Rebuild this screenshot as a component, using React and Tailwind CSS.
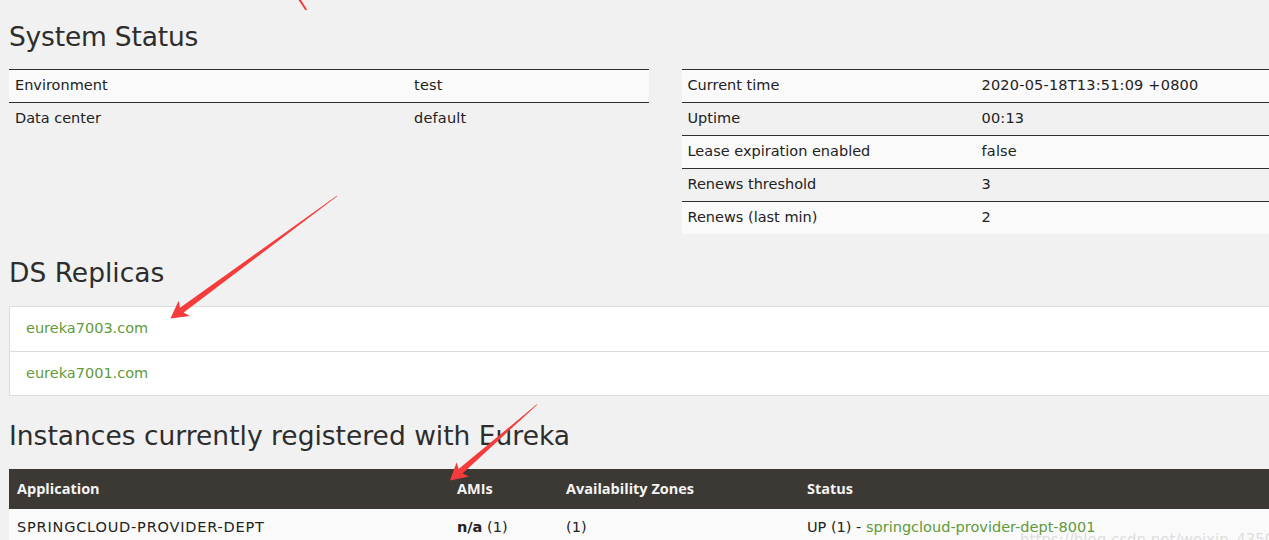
import React from "react";

const heading = "text-[26.5px] leading-[31px] text-[#2d2d2d] font-['DejaVu_Sans',sans-serif]";
const green = "text-[#5f9b3a]";

const leftRows = [
  ["Environment", "test"],
  ["Data center", "default"],
];

const rightRows = [
  ["Current time", "2020-05-18T13:51:09 +0800"],
  ["Uptime", "00:13"],
  ["Lease expiration enabled", "false"],
  ["Renews threshold", "3"],
  ["Renews (last min)", "2"],
];

function InfoTable({ rows, width, split }) {
  return (
    <div className={width}>
      {rows.map(([k, v], i) => (
        <div
          key={k}
          className={`flex h-[33px] items-center border-t border-[#2f2f2f] ${i % 2 === 0 ? "bg-[#fafafa]" : ""}`}
        >
          <div className={`${split} pl-[6px]`}>{k}</div>
          <div className="pl-[5px] tracking-[0.2px]">{v}</div>
        </div>
      ))}
    </div>
  );
}

function arrowPoints(tail, tip, headLen, headHalf, shaftBase, shaftTail) {
  const dx = tail[0] - tip[0];
  const dy = tail[1] - tip[1];
  const L = Math.hypot(dx, dy);
  const ux = dx / L;
  const uy = dy / L;
  const nx = -uy;
  const ny = ux;
  const bx = tip[0] + ux * headLen;
  const by = tip[1] + uy * headLen;
  const p = [
    [tip[0], tip[1]],
    [bx + ux * 3 + nx * headHalf, by + uy * 3 + ny * headHalf],
    [bx + nx * shaftBase / 2, by + ny * shaftBase / 2],
    [tail[0] + nx * shaftTail / 2, tail[1] + ny * shaftTail / 2],
    [tail[0] - nx * shaftTail / 2, tail[1] - ny * shaftTail / 2],
    [bx - nx * shaftBase / 2, by - ny * shaftBase / 2],
    [bx + ux * 3 - nx * headHalf, by + uy * 3 - ny * headHalf],
  ];
  return p.map((q) => q.map((n) => n.toFixed(1)).join(",")).join(" ");
}

function Arrows() {
  return (
    <svg className="pointer-events-none absolute left-0 top-0" width="1269" height="540">
      <polygon points="298.5,0 301,0 307,9.5 305.5,10.5" fill="#f53b3b" />
      <polygon points={arrowPoints([337, 196], [170.5, 318.5], 14, 9.5, 6, 0.6)} fill="#f53b3b" />
      <polygon points={arrowPoints([537, 404.5], [450, 480.5], 14, 9.5, 6, 0.6)} fill="#f53b3b" />
    </svg>
  );
}

export default function App() {
  return (
    <div className="relative h-[540px] w-full overflow-hidden bg-[#f1f1f1] font-['DejaVu_Sans',sans-serif] text-[14.5px] text-[#222]">
      <div className="w-[1320px] pl-[9px]">
        <h1 className={`${heading} pt-[21px] tracking-[-0.2px]`}>System Status</h1>
        <div className="mt-[17px] flex items-start gap-[33px]">
          <InfoTable rows={leftRows} width="w-[641px]" split="w-[400px]" />
          <InfoTable rows={rightRows} width="w-[640px]" split="w-[295px]" />
        </div>

        <h1 className={`${heading} mt-[23px]`}>DS Replicas</h1>
        <div className="mt-[18px] border border-[#dcdcdc] bg-white">
          <div className={`flex h-[44px] items-center pl-[16px] ${green}`}>eureka7003.com</div>
          <div className={`flex h-[44px] items-center border-t border-[#dcdcdc] pl-[16px] ${green}`}>eureka7001.com</div>
        </div>

        <h1 className={`${heading} mt-[24px]`}>Instances currently registered with Eureka</h1>
        <div className="mt-[18px]">
          <div className="flex h-[40px] items-center bg-[#3c3833] font-['Open_Sans',sans-serif] text-[14.5px] font-bold text-[#f4f4f4]">
            <div className="w-[440px] pl-[8px]">Application</div>
            <div className="w-[109px] pl-[8px]">AMIs</div>
            <div className="w-[241px] pl-[8px]">Availability Zones</div>
            <div className="pl-[8px]">Status</div>
          </div>
          <div className="flex h-[36px] items-center bg-[#fafafa] pt-[2px]">
            <div className="w-[440px] pl-[8px] tracking-[0.8px]">SPRINGCLOUD-PROVIDER-DEPT</div>
            <div className="w-[109px] pl-[8px]">
              <span className="font-bold">n/a</span> (1)
            </div>
            <div className="w-[241px] pl-[8px]">(1)</div>
            <div className="pl-[8px]">
              UP (1) - <span className={green}>springcloud-provider-dept-8001</span>
            </div>
          </div>
        </div>
      </div>
      <div className="pointer-events-none absolute left-[1020px] top-[529px] whitespace-nowrap text-[15px] text-[#dedede]">
        https://blog.csdn.net/weixin_43504
      </div>
      <Arrows />
    </div>
  );
}
